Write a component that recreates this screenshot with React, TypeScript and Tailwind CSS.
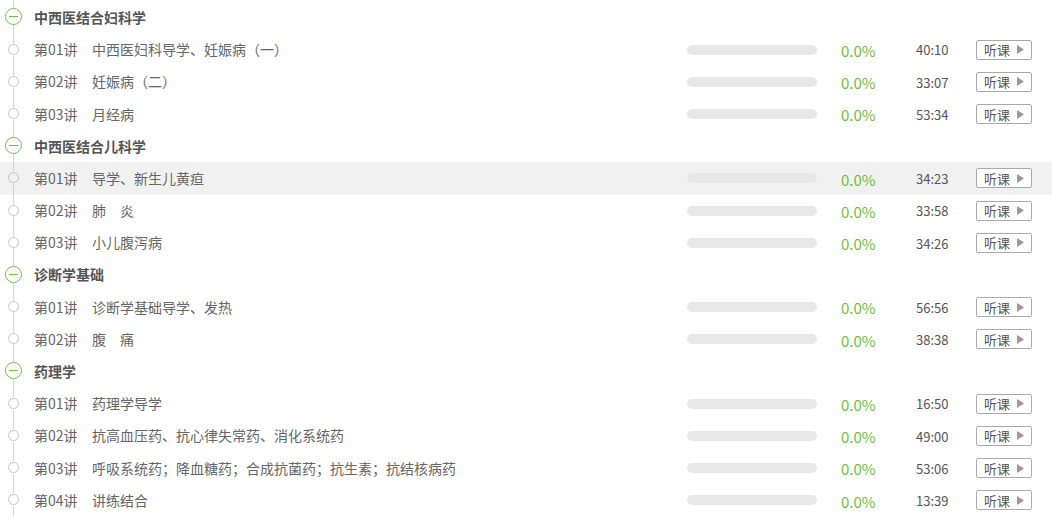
import React from 'react';

type Lesson = {
  no: string;
  title: string;
  time: string;
};

type Section = {
  name: string;
  lessons: Lesson[];
};

const sections: Section[] = [
  {
    name: '中西医结合妇科学',
    lessons: [
      { no: '第01讲', title: '中西医妇科导学、妊娠病（一）', time: '40:10' },
      { no: '第02讲', title: '妊娠病（二）', time: '33:07' },
      { no: '第03讲', title: '月经病', time: '53:34' },
    ],
  },
  {
    name: '中西医结合儿科学',
    lessons: [
      { no: '第01讲', title: '导学、新生儿黄疸', time: '34:23' },
      { no: '第02讲', title: '肺　炎', time: '33:58' },
      { no: '第03讲', title: '小儿腹泻病', time: '34:26' },
    ],
  },
  {
    name: '诊断学基础',
    lessons: [
      { no: '第01讲', title: '诊断学基础导学、发热', time: '56:56' },
      { no: '第02讲', title: '腹　痛', time: '38:38' },
    ],
  },
  {
    name: '药理学',
    lessons: [
      { no: '第01讲', title: '药理学导学', time: '16:50' },
      { no: '第02讲', title: '抗高血压药、抗心律失常药、消化系统药', time: '49:00' },
      { no: '第03讲', title: '呼吸系统药；降血糖药；合成抗菌药；抗生素；抗结核病药', time: '53:06' },
      { no: '第04讲', title: '讲练结合', time: '13:39' },
    ],
  },
];

const SectionRow = ({ name }: { name: string }) => (
  <div className="flex h-[32.2px] items-center">
    <div className="flex h-full w-[26px] flex-col items-center">
      <div className="h-[7px] w-px bg-[#d4d4d4]" />
      <div className="flex h-[17px] w-[17px] items-center justify-center rounded-full border border-[#6cc04a]">
        <div className="h-px w-[9px] bg-[#6cc04a]" />
      </div>
      <div className="w-px flex-1 bg-[#d4d4d4]" />
    </div>
    <div className="ml-[8px] text-[14px] font-bold text-[#555]">{name}</div>
  </div>
);

const LessonRow = ({ lesson, active }: { lesson: Lesson; active?: boolean }) => (
  <div className={`flex h-[32.2px] items-center pr-[20px] ${active ? 'bg-[#f1f1f1]' : ''}`}>
    <div className="flex h-full w-[26px] flex-col items-center">
      <div className="h-[9px] w-px bg-[#d4d4d4]" />
      <div className="mt-[1px] h-[11px] w-[11px] rounded-full border border-[#c4c4c4]" />
      <div className="mt-[1px] w-px flex-1 bg-[#d4d4d4]" />
    </div>
    <div className="ml-[8px] flex min-w-0 flex-1 items-center text-[14px] text-[#666]">
      <span className="w-[58px] shrink-0">{lesson.no}</span>
      <span className="truncate">{lesson.title}</span>
    </div>
    <div className="h-[10px] w-[130px] shrink-0 rounded-full bg-[#e8e8e8]" />
    <div className="ml-[24px] w-[75px] shrink-0 pt-[3px] text-[15px] text-[#6cbf3e]">0.0%</div>
    <div className="w-[60px] shrink-0 pt-[1px] text-[13px] text-[#555]">{lesson.time}</div>
    <button className="flex h-[20px] w-[56px] shrink-0 items-center justify-center gap-[7px] rounded-[2px] border border-[#a9a9a9] bg-white text-[13px] leading-none text-[#555]">
      <span>听课</span>
      <svg width="7" height="9" viewBox="0 0 7 9">
        <path d="M0 0L7 4.5L0 9Z" fill="#9a9a9a" />
      </svg>
    </button>
  </div>
);

export default function App() {
  return (
    <div
      className="h-[521px] w-[1052px] overflow-hidden bg-white pt-[1.4px]"
      style={{ fontFamily: '"Noto Sans CJK SC", "Noto Sans", sans-serif' }}
    >
      {sections.map((s, si) => (
        <div key={s.name}>
          <SectionRow name={s.name} />
          {s.lessons.map((l, li) => (
            <LessonRow key={l.no} lesson={l} active={si === 1 && li === 0} />
          ))}
        </div>
      ))}
    </div>
  );
}
